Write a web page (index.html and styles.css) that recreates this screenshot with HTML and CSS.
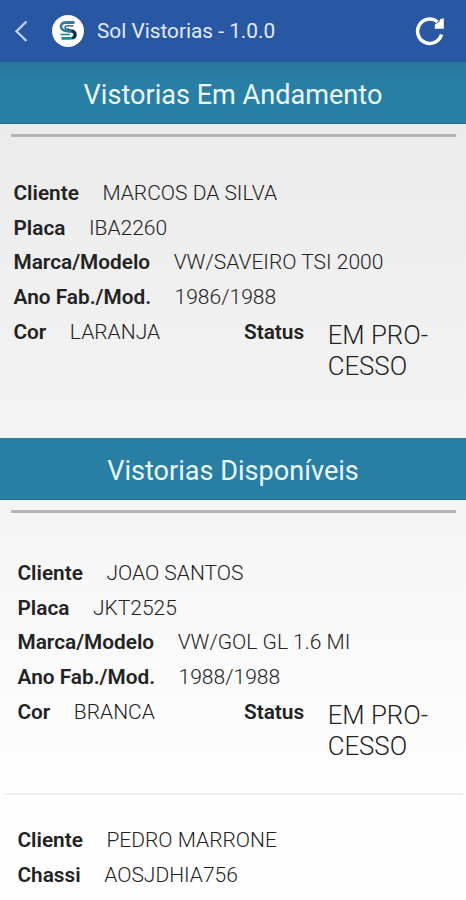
FILE: index.html
```html
<!DOCTYPE html>
<html lang="pt-BR">
<head>
<meta charset="utf-8">
<title>Sol Vistorias</title>
<link rel="stylesheet" href="styles.css">
</head>
<body>
<header class="appbar">
  <svg class="back" viewBox="0 0 14 24" aria-hidden="true"><path d="M12.500 2.500 2.500 12.300l10 9.700"/></svg>
  <svg class="logo" viewBox="0 0 32 32" aria-hidden="true">
    <circle cx="16" cy="16" r="16" fill="#fff"/>
    <path d="M22.500 7.500H14c-3.600 0-5.300 1.700-5 4.300.4 3 2.700 3.500 5 4l5 .9" fill="none" stroke="#2b7f9c" stroke-width="2.800"/>
    <path d="M21.500 10.900H15c-2.500 0-2.800 2.400-.5 3l5 1.100" fill="none" stroke="#1b4c66" stroke-width="1.300"/>
    <path d="M17.500 15.700c6.800 1 7.300 7.500 1 7.700H9.500" fill="none" stroke="#1787a6" stroke-width="2.700"/>
    <path d="M8.500 19.500H18" fill="none" stroke="#1787a6" stroke-width="1.600"/>
    <path d="M19.500 15.600c5.300 1.600 4.600 6.500.8 7.500" fill="none" stroke="#0c2c43" stroke-width="2.800"/>
  </svg>
  <span class="title">Sol Vistorias - 1.0.0</span>
  <svg class="refresh" viewBox="0 0 30 30" aria-hidden="true">
    <path d="M26.500 18.600A12.200 12.200 0 1 1 22.500 5.800" fill="none" stroke="#fff" stroke-width="3.500"/>
    <path d="M28.800 2.300v10.500h-9V8.600l4-2.500 1.700-3.200z" fill="#fff"/>
  </svg>
</header>
<main>
  <section>
    <h2 class="heading heading-first">Vistorias Em Andamento</h2>
    <hr class="rule">
    <article class="card card-active">
      <div class="row"><b>Cliente</b><span>MARCOS DA SILVA</span></div>
      <div class="row"><b>Placa</b><span>IBA2260</span></div>
      <div class="row"><b>Marca/Modelo</b><span>VW/SAVEIRO TSI 2000</span></div>
      <div class="row"><b>Ano Fab./Mod.</b><span>1986/1988</span></div>
      <div class="split">
        <div class="row"><b>Cor</b><span>LARANJA</span></div>
        <div class="row"><b>Status</b><span class="status">EM PRO-<br>CESSO</span></div>
      </div>
    </article>
  </section>
  <section>
    <h2 class="heading">Vistorias Disponíveis</h2>
    <hr class="rule">
    <article class="card">
      <div class="row"><b>Cliente</b><span>JOAO SANTOS</span></div>
      <div class="row"><b>Placa</b><span>JKT2525</span></div>
      <div class="row"><b>Marca/Modelo</b><span>VW/GOL GL 1.6 MI</span></div>
      <div class="row"><b>Ano Fab./Mod.</b><span>1988/1988</span></div>
      <div class="split">
        <div class="row"><b>Cor</b><span>BRANCA</span></div>
        <div class="row"><b>Status</b><span class="status">EM PRO-<br>CESSO</span></div>
      </div>
    </article>
    <hr class="divider">
    <article class="card card-next">
      <div class="row"><b>Cliente</b><span>PEDRO MARRONE</span></div>
      <div class="row"><b>Chassi</b><span>AOSJDHIA756</span></div>
    </article>
  </section>
</main>
</body>
</html>
```
FILE: styles.css
```css
* { box-sizing: border-box; }
body {
  margin: 0;
  height: 900px;
  overflow: hidden;
  font-family: Roboto, sans-serif;
  color: #222;
  background: linear-gradient(#ebebeb 120px, #f0f0f0 300px, #f5f5f5 510px, #fefefe 780px);
}
.appbar {
  display: flex;
  align-items: center;
  height: 62px;
  padding: 0 21px 0 14px;
  background: #2857a4;
  color: #e4ecfa;
}
.back { width: 14px; height: 24px; fill: none; stroke: #c3d3f2; stroke-width: 2.3; }
.logo { width: 32px; height: 32px; margin-left: 24px; }
.title { margin-left: 13px; font-size: 20.8px; white-space: nowrap; }
.refresh { width: 30px; height: 30px; margin-left: auto; }
.heading {
  display: flex;
  align-items: center;
  justify-content: center;
  height: 62px;
  margin: 0;
  padding-top: 5px;
  font-size: 27.1px;
  font-weight: 400;
  color: #e9f9ff;
  background: #297ea4;
  border-bottom: 1px solid #167397;
  white-space: nowrap;
}
.heading-first { padding-top: 4px; background: linear-gradient(#29779a, #297ea4 16px); }
.rule { height: 3px; margin: 10px 10px 0 11px; border: 0; background: #b3b4b4; }
.card { padding: 43.2px 0 0 17.5px; height: 280px; }
.card-active { padding-left: 13.5px; height: 301px; padding-top: 39.2px; }
.card-next { padding-top: 28.4px; height: 105px; }
.row {
  display: flex;
  gap: 23.5px;
  height: 34.6px;
  line-height: 34.6px;
  font-size: 21px;
  white-space: nowrap;
}
.row b { font-weight: 600; font-size: 20.8px; }
.row span { font-weight: 300; }
.split { display: grid; grid-template-columns: 1fr 222px; }
.row .status { font-size: 25.8px; line-height: 31px; padding-top: 5.3px; font-weight: 350; }
.divider { height: 2px; margin: 0 3px 0 4px; border: 0; background: #f0f0f0; }
```
